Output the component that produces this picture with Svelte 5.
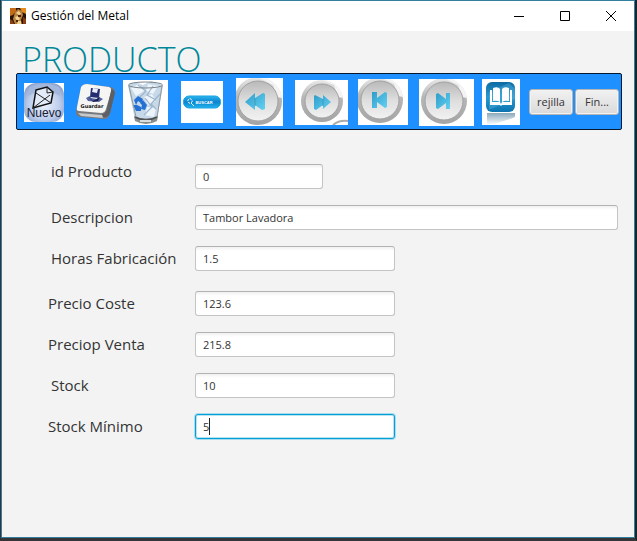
<script>
  let product = $state({
    id: '0',
    description: 'Tambor Lavadora',
    hours: '1.5',
    cost: '123.6',
    price: '215.8',
    stock: '10',
    minimum: '5'
  });
</script>

{#snippet disc(cx, cy, r)}
  <circle {cx} {cy} r={r + 4} fill="url(#rim)" />
  <path d="M{cx} {cy - r - 4}a{r + 4} {r + 4} 0 0 1 {r + 4} {r + 1}l-5 -1l-4 -12z" fill="#f4f4f4" />
  <circle {cx} {cy} {r} fill="url(#face)" stroke="#a2a2a2" stroke-width="1" />
{/snippet}

<div class="desktop">
  <main class="window">
    <header class="titlebar">
      <svg class="app-icon" viewBox="0 0 16 16" aria-hidden="true">
        <rect width="16" height="16" fill="#2b1408" />
        <path d="M0 0h6v3l-3 4-3 1z" fill="#c76a14" />
        <path d="M10 0h6v6l-4-2z" fill="#e58b1c" />
        <path d="M5 4l3-3 4 2 1 4-2 5 1 4H5L3 11z" fill="#b9833f" />
        <path d="M6 5l3-2 2 3-2 1zM5 9l3-1 2 3-3 2zM8 13h3v3H7z" fill="#f1d394" />
        <path d="M0 11l3 2 1 3H0zM13 9l3 2v5h-3z" fill="#8a3f0c" />
        <path d="M8 7h3v2H8zM6 12h2v2H6z" fill="#4a230c" />
      </svg>
      <span class="caption">Gestión del Metal</span>
      <div class="controls">
        <button aria-label="Minimizar"><svg viewBox="0 0 10 10"><path d="M0 5.5h10" /></svg></button>
        <button aria-label="Maximizar"><svg viewBox="0 0 10 10"><path d="M.5.5h9v9h-9z" /></svg></button>
        <button aria-label="Cerrar"><svg viewBox="0 0 10 10"><path d="M0 0l10 10M10 0L0 10" /></svg></button>
      </div>
    </header>

    <h1>PRODUCTO</h1>

    <div class="toolbar" role="toolbar" aria-label="Producto">
      <button class="tool" aria-label="Nuevo">
        <svg width="40" height="39" viewBox="0 0 40 39">
          <defs>
            <radialGradient id="glass" cx=".5" cy=".55" r=".6">
              <stop offset="0" stop-color="#eef3fd" />
              <stop offset=".65" stop-color="#bccdec" />
              <stop offset="1" stop-color="#8da3cf" />
            </radialGradient>
            <linearGradient id="face" x1="0" y1="0" x2="0" y2="1">
              <stop offset="0" stop-color="#b9b9b9" />
              <stop offset=".5" stop-color="#dedede" />
              <stop offset="1" stop-color="#f2f2f2" />
            </linearGradient>
            <linearGradient id="rim" x1="0" y1="0" x2="0" y2="1">
              <stop offset="0" stop-color="#e9e9e9" />
              <stop offset=".4" stop-color="#b8b8b8" />
              <stop offset="1" stop-color="#a4a4a4" />
            </linearGradient>
            <linearGradient id="aqua" x1="0" y1="0" x2="1" y2="1">
              <stop offset="0" stop-color="#2f9dc9" />
              <stop offset="1" stop-color="#63d0f2" />
            </linearGradient>
            <linearGradient id="pill" x1="0" y1="0" x2="0" y2="1">
              <stop offset="0" stop-color="#2cb4ee" />
              <stop offset=".5" stop-color="#0a84cf" />
              <stop offset="1" stop-color="#20b5f0" />
            </linearGradient>
            <linearGradient id="tile" x1="0" y1="0" x2="0" y2="1">
              <stop offset="0" stop-color="#0d6ba3" />
              <stop offset=".5" stop-color="#2999d0" />
              <stop offset="1" stop-color="#0b74b0" />
            </linearGradient>
            <linearGradient id="fade" x1="0" y1="0" x2="0" y2="1">
              <stop offset="0" stop-color="#8ba9bc" />
              <stop offset="1" stop-color="#ffffff" />
            </linearGradient>
          </defs>
          <rect width="40" height="39" fill="#fff" />
          <rect width="40" height="39" rx="12" fill="url(#glass)" />
          <path d="M6 4Q20-2 35 4Q37 9 36 13Q20 3 4 13Q3 8 6 4z" fill="#a4b7dc" />
          <path d="M12 7L23 4L29 9L27 20L9 25z" fill="#e3eaf8" stroke="#111" stroke-width="1.5" />
          <path d="M23 4l0 6 6-1M12 10l15 10M26 12L9 25" fill="none" stroke="#222" stroke-width="1" />
          <text x="20" y="34" text-anchor="middle" font-family="Liberation Sans, Arial, sans-serif" font-size="12" fill="#182032">Nuevo</text>
        </svg>
      </button>

      <button class="tool" aria-label="Guardar">
        <svg width="42" height="36" viewBox="0 0 42 36">
          <path d="M6 3Q8 0 12 0L36 3Q40 4 40 8L35 30Q33 36 28 35L5 33Q0 32 1 27z" fill="#77797d" />
          <path d="M6 3Q8 0 12 0L34 3Q37 4 36 8L31 25Q30 29 26 29L4 27Q1 27 2 23z" fill="#f5f5f3" />
          <path d="M36 7L32 25Q31 30 27 30L28 33Q33 34 35 29L40 9Q39 5 36 5z" fill="#5c5f64" />
          <path d="M3 29L27 31L28 34L6 32z" fill="#c6c8ca" />
          <path d="M16 4l9 1-1 9-9-1z" fill="#242c72" />
          <path d="M18 4l5 1-1 4-5-1z" fill="#e9edfa" />
          <path d="M11 14l4-2 1 2 6 1 2-2 4 2-4 3-11-1z" fill="#5261a0" />
          <path d="M13 12l5 5 7-4-2 4-5 1z" fill="#171c4b" />
          <text x="17" y="24" text-anchor="middle" font-family="DejaVu Sans, sans-serif" font-weight="700" font-size="5" fill="#111">Guardar</text>
        </svg>
      </button>

      <button class="tool" aria-label="Borrar">
        <svg width="45" height="45" viewBox="0 0 45 45">
          <rect width="45" height="45" fill="#fff" />
          <path d="M5 5L12 39Q23 46 34 39L40 5z" fill="#b5c8d8" />
          <path d="M6 4L13 2L20 5L28 1L39 5L37 17L31 20L38 16L34 38L12 38z" fill="#c7d9e8" />
          <path d="M8 8l8-4 5 7-8 5zM25 4l10 2-5 8-7-3zM21 17l8-3 4 7-8 4zM24 27l9 1-2 9-9-2z" fill="#edf4fa" />
          <path d="M15 5l8 6-7 7M30 6l-6 9 9 5M37 14l-9 10 5 5M22 18l7 9-8 8" fill="none" stroke="#9db6cb" stroke-width="1.2" />
          <path d="M11 20l4-4 5 3-2 4-3-2-2 4zM20 20l4 5-2 5-4-1 1-4-2-2zM18 31l-5 0-3-6 4 0 4 2z" fill="#2471d3" />
          <path d="M11 36Q23 41 35 36L34 41Q23 47 12 41z" fill="#888d8e" />
          <path d="M12 37Q23 43 34 37" stroke="#4f5254" fill="none" stroke-width="1.5" />
          <path d="M17 41h11" stroke="#dadddd" stroke-width="2" />
          <ellipse cx="22.5" cy="5" rx="17" ry="3" fill="none" stroke="#77828b" stroke-width="1" />
          <path d="M6 6l7 31M39 6l-5 31" stroke="#8c99a3" fill="none" />
        </svg>
      </button>

      <button class="tool" aria-label="Buscar">
        <svg width="42" height="42" viewBox="0 0 42 42">
          <rect width="42" height="42" fill="#fff" />
          <rect x="2.5" y="15" width="37" height="12" rx="5.5" fill="url(#pill)" stroke="#1ba3e3" />
          <circle cx="9" cy="20" r="2.2" fill="none" stroke="#fff" stroke-dasharray="2 1" />
          <path d="M10 22l3 3" stroke="#d8f2ff" />
          <text x="23" y="23" text-anchor="middle" font-family="Liberation Sans, Arial, sans-serif" font-weight="700" font-size="4" fill="#fff">BUSCAR</text>
        </svg>
      </button>

      <button class="tool" aria-label="Retroceder">
        <svg width="47" height="48" viewBox="0 0 47 48">
          <rect width="47" height="48" fill="#fff" />
          {@render disc(22, 23, 20)}
          <path d="M9 24L19 15v5l8-5 2 1v15l-3 1-7-5v5z" fill="url(#aqua)" />
          <path d="M19 20v8" stroke="#3a9ac0" />
        </svg>
      </button>

      <button class="tool" aria-label="Avanzar">
        <svg width="53" height="45" viewBox="0 0 53 45">
          <rect width="53" height="45" fill="#fff" />
          {@render disc(27, 21, 17)}
          <path d="M36 22L28 15v4l-8-4-1 1v13l2 1 7-5v4z" fill="url(#aqua)" />
          <path d="M28 19v7" stroke="#3a9ac0" />
          <path d="M38 45q6-5 15-4" fill="none" stroke="#aaa" stroke-width="2" />
        </svg>
      </button>

      <button class="tool" aria-label="Primero">
        <svg width="50" height="46" viewBox="0 0 50 46">
          <rect width="50" height="46" fill="#fff" />
          {@render disc(22, 21, 19)}
          <path d="M14 13h5v6l8-6 2 1v14l-2 1-8-6v6h-5z" fill="url(#aqua)" />
        </svg>
      </button>

      <button class="tool" aria-label="Último">
        <svg width="55" height="47" viewBox="0 0 55 47">
          <rect width="55" height="47" fill="#fff" />
          {@render disc(25, 22, 19)}
          <path d="M31 14h-4v6l-8-6-2 1v14l2 1 8-6v6h4z" fill="url(#aqua)" />
        </svg>
      </button>

      <button class="tool" aria-label="Catálogo">
        <svg width="38" height="46" viewBox="0 0 38 46">
          <rect width="38" height="46" fill="#fff" />
          <path d="M5 34h28v4q-14 6-28 8z" fill="url(#fade)" />
          <rect x="4" y="3" width="29" height="30" rx="6" fill="url(#tile)" />
          <path d="M7 13L27 4L33 10V20L7 31z" fill="#58b5df" opacity=".4" />
          <path d="M8 11h2v12h8l1 2 1-2h8V11h2v15H20l-1 1-1-1H8z" fill="#fff" />
          <path d="M11 9q5-2 7 1v13q-3-2-7-1zM27 9q-5-2-7 1v13q3-2 7-1z" fill="#fff" />
        </svg>
      </button>

      <button class="push">rejilla</button>
      <button class="push">Fin...</button>
    </div>

    <form class="form">
      <div class="row top">
        <label class="inset" for="id">id Producto</label>
        <input id="id" class="short" type="text" bind:value={product.id} />
      </div>
      <div class="row">
        <label class="inset" for="description">Descripcion</label>
        <input id="description" class="long" type="text" bind:value={product.description} />
      </div>
      <div class="row">
        <label class="inset" for="hours">Horas Fabricación</label>
        <input id="hours" type="text" bind:value={product.hours} />
      </div>
      <div class="row group">
        <label for="cost">Precio Coste</label>
        <input id="cost" type="text" bind:value={product.cost} />
      </div>
      <div class="row">
        <label for="price">Preciop Venta</label>
        <input id="price" type="text" bind:value={product.price} />
      </div>
      <div class="row">
        <label class="inset" for="stock">Stock</label>
        <input id="stock" type="text" bind:value={product.stock} />
      </div>
      <div class="row">
        <label for="minimum">Stock Mínimo</label>
        <div class="field">
          <input id="minimum" class="active" type="text" bind:value={product.minimum} />
          <span class="caret"></span>
        </div>
      </div>
    </form>
  </main>
</div>

<style>
  .desktop {
    box-sizing: border-box;
    display: flex;
    min-height: 100vh;
    border: solid #353537;
    border-width: 0 2px 3px 1px;
    border-right-color: #1d2427;
    font-family: "Open Sans", "Noto Sans", sans-serif;
    color: #333;
  }

  .window {
    flex: 1;
    min-width: 0;
    border: 1px solid #347f9d;
    background: #f3f3f3;
  }

  button {
    margin: 0;
    font-family: inherit;
  }

  .titlebar {
    display: flex;
    align-items: center;
    height: 30px;
    padding-left: 8px;
    background: #fff;
  }

  .app-icon {
    width: 16px;
    height: 16px;
  }

  .caption {
    flex: 1;
    padding-left: 5px;
    font-size: 12px;
    line-height: 16px;
    color: #000;
  }

  .controls {
    display: flex;
  }

  .controls button {
    display: flex;
    align-items: center;
    justify-content: center;
    width: 46px;
    height: 30px;
    padding: 0;
    border: 0;
    background: none;
  }

  .controls svg {
    width: 10px;
    height: 10px;
    fill: none;
    stroke: #000;
    overflow: visible;
  }

  h1 {
    margin: 0;
    padding: 11px 0 0 20px;
    font-size: 34px;
    font-weight: 300;
    line-height: 34px;
    height: 31px;
    color: #008799;
  }

  .toolbar {
    display: grid;
    grid-template-columns: 51fr 48fr 58fr 55fr 59fr 63fr 61fr 63fr 47fr 46fr 44fr;
    align-items: center;
    box-sizing: border-box;
    height: 57px;
    margin: 0 12px 0 14px;
    padding: 1px 2px 0 7px;
    border: 1px solid #06182c;
    border-radius: 2px;
    background: #1e90ff;
  }

  .tool {
    display: block;
    justify-self: start;
    padding: 0;
    border: 0;
    background: none;
  }

  .tool svg {
    display: block;
  }

  .push {
    justify-self: start;
    width: 44px;
    height: 26px;
    padding: 0;
    border: 1px solid #b5b5b5;
    border-radius: 3px;
    background: linear-gradient(#f1f1f1, #dadada);
    box-shadow: inset 0 0 0 1px #f2f2f2;
    font-size: 11px;
    line-height: 16px;
    color: #333;
  }

  .form {
    display: flex;
    flex-direction: column;
    gap: 16px;
    padding: 34px 16px 16px 46px;
  }

  .row {
    display: flex;
    align-items: center;
  }

  .row.top {
    align-items: flex-start;
  }

  .row.group {
    margin-top: 4px;
  }

  label {
    box-sizing: border-box;
    flex: none;
    width: 147px;
    padding-bottom: 2px;
    font-size: 15px;
    line-height: 14px;
    white-space: nowrap;
  }

  label.inset {
    padding-left: 3px;
  }

  input {
    box-sizing: border-box;
    width: 200px;
    height: 25px;
    padding: 0 7px;
    border: 1px solid #c4c4c4;
    border-top-color: #b2b2b2;
    border-radius: 3px;
    outline: 0;
    background: linear-gradient(#f0f0f0, #fff 4px);
    font-family: inherit;
    font-size: 11px;
    color: #333;
  }

  input.short {
    width: 128px;
  }

  input.long {
    flex: 1;
    min-width: 0;
  }

  input.active {
    border-color: #039ed3;
    background: #fff;
    box-shadow: 0 0 0 1px #a9dcee, inset 0 0 0 1px #b9e4f2;
    caret-color: transparent;
  }

  .field {
    position: relative;
  }

  .caret {
    position: absolute;
    top: 4px;
    left: 14px;
    width: 1px;
    height: 17px;
    background: #222;
  }
</style>
